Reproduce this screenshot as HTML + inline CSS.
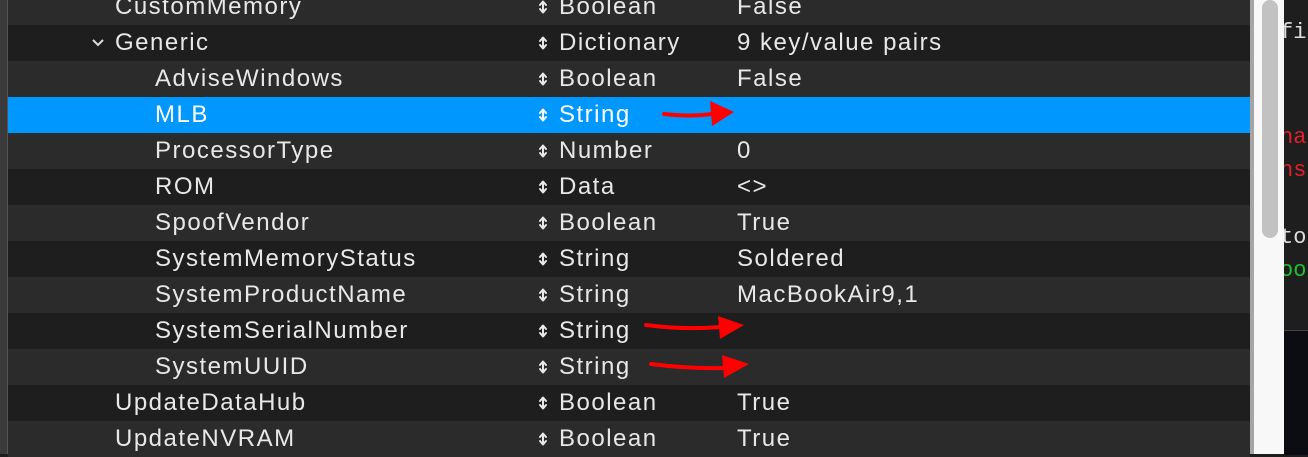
<!DOCTYPE html>
<html><head><style>
body{margin:0;width:1308px;height:454px;overflow:hidden;background:#1e1e1e;position:relative;font-family:"Liberation Sans",sans-serif}
.left{position:absolute;left:0;top:0;width:7px;height:454px;background:#3a3a3a;border-right:1px solid #555}
.row{position:absolute;left:8px;width:1242px;height:36px;color:#e8e8e8;font-size:24px;letter-spacing:1.5px;line-height:36px}
.l{background:#2b2b2b}.d{background:#1e1e1e}.s{background:#0098ff;color:#fff}
.row span{position:absolute;white-space:nowrap}
.k1{left:107px}.k2{left:147px}.t{left:551px}.v{left:729px}
.row svg{position:absolute;left:530px;top:11px}
.sb{position:absolute;left:1250px;top:0;width:4px;height:454px;background:#a5a5a5}
.tr{position:absolute;left:1254px;top:0;width:30px;height:454px;background:#f8f8f8}
.th{position:absolute;left:1262px;top:0;width:16px;height:238px;background:#c2c2c2;border-radius:8px}
.ed{position:absolute;left:1284px;top:0;width:24px;height:454px;background:#1e1e1e;font-family:"Liberation Mono",monospace;font-size:22px;overflow:hidden}
.ed div{position:absolute;left:-4px}
.bot{position:absolute;left:1284px;top:330px;width:24px;height:124px;background:#0c0d12;border-top:1px solid #444}
</style></head><body>
<div class="left"></div>
<svg width="0" height="0" style="position:absolute"><defs><g id="ud"><path d="M2 5 L5 1.5 L8 5 M5 2 V12 M2 9 L5 12.5 L8 9" fill="none" stroke="currentColor" stroke-width="2" stroke-linecap="round" stroke-linejoin="round"/></g></defs></svg>
<div class="row l" style="top:-11px"><span class="k1">CustomMemory</span><svg width="10" height="14"><use href="#ud"/></svg><span class="t">Boolean</span><span class="v">False</span></div>
<div class="row d" style="top:25px"><svg style="left:83px;top:13px" width="14" height="9"><path d="M2 2 L7 7 L12 2" fill="none" stroke="#ddd" stroke-width="2"/></svg><span class="k1">Generic</span><svg width="10" height="14"><use href="#ud"/></svg><span class="t">Dictionary</span><span class="v">9 key/value pairs</span></div>
<div class="row l" style="top:61px"><span class="k2">AdviseWindows</span><svg width="10" height="14"><use href="#ud"/></svg><span class="t">Boolean</span><span class="v">False</span></div>
<div class="row s" style="top:97px"><span class="k2">MLB</span><svg width="10" height="14"><use href="#ud"/></svg><span class="t">String</span></div>
<div class="row l" style="top:133px"><span class="k2">ProcessorType</span><svg width="10" height="14"><use href="#ud"/></svg><span class="t">Number</span><span class="v">0</span></div>
<div class="row d" style="top:169px"><span class="k2">ROM</span><svg width="10" height="14"><use href="#ud"/></svg><span class="t">Data</span><span class="v">&lt;&gt;</span></div>
<div class="row l" style="top:205px"><span class="k2">SpoofVendor</span><svg width="10" height="14"><use href="#ud"/></svg><span class="t">Boolean</span><span class="v">True</span></div>
<div class="row d" style="top:241px"><span class="k2">SystemMemoryStatus</span><svg width="10" height="14"><use href="#ud"/></svg><span class="t">String</span><span class="v">Soldered</span></div>
<div class="row l" style="top:277px"><span class="k2">SystemProductName</span><svg width="10" height="14"><use href="#ud"/></svg><span class="t">String</span><span class="v">MacBookAir9,1</span></div>
<div class="row d" style="top:313px"><span class="k2">SystemSerialNumber</span><svg width="10" height="14"><use href="#ud"/></svg><span class="t">String</span></div>
<div class="row l" style="top:349px"><span class="k2">SystemUUID</span><svg width="10" height="14"><use href="#ud"/></svg><span class="t">String</span></div>
<div class="row d" style="top:385px"><span class="k1">UpdateDataHub</span><svg width="10" height="14"><use href="#ud"/></svg><span class="t">Boolean</span><span class="v">True</span></div>
<div class="row l" style="top:421px"><span class="k1">UpdateNVRAM</span><svg width="10" height="14"><use href="#ud"/></svg><span class="t">Boolean</span><span class="v">True</span></div>
<svg style="position:absolute;left:0;top:0" width="1308" height="454">
<g fill="#f00" stroke="#f00" stroke-linecap="round">
<path d="M664 114 Q690 117 712 114" stroke-width="4" fill="none"/><polygon points="710,101 734,112 712,126" stroke="none"/>
<path d="M646 325 Q685 330 720 327" stroke-width="4" fill="none"/><polygon points="718,316 744,325 720,339" stroke="none"/>
<path d="M651 364 Q690 369 724 368" stroke-width="4" fill="none"/><polygon points="722,355 749,364 724,378" stroke="none"/>
</g></svg>
<div class="sb"></div><div class="tr"></div><div class="th"></div>
<div class="ed">
<div style="top:20px;color:#ddd">fi</div>
<div style="top:125px;color:#e0202a">na</div>
<div style="top:158px;color:#e0202a">ns</div>
<div style="top:225px;color:#ddd">to</div>
<div style="top:258px;color:#20c030">oo</div>
</div>
<div class="bot"></div>
</body></html>
